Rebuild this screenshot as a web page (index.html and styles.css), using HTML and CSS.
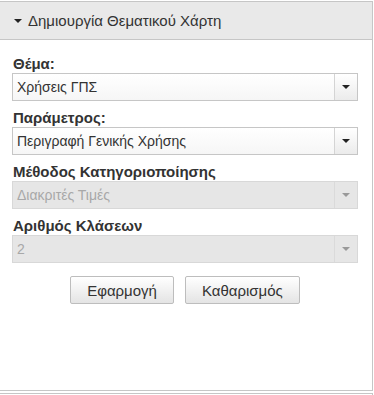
FILE: index.html
```html
<!DOCTYPE html>
<html lang="el">
<head>
  <meta charset="UTF-8" />
  <meta name="viewport" content="width=device-width, initial-scale=1.0"/>
  <title>Δημιουργία Θεματικού Χάρτη</title>
  <link rel="stylesheet" href="styles.css">
</head>
<body>
  <div class="panel">
    <div class="panel-head">
      <span class="caret"></span>Δημιουργία Θεματικού Χάρτη
    </div>
    <div class="panel-body">
      <div class="field">
        <div class="field-label">Θέμα:</div>
        <div class="combo">
          <span class="combo-text">Χρήσεις ΓΠΣ</span>
          <span class="combo-btn"><span class="arrow"></span></span>
        </div>
      </div>
      <div class="field">
        <div class="field-label">Παράμετρος:</div>
        <div class="combo">
          <span class="combo-text">Περιγραφή Γενικής Χρήσης</span>
          <span class="combo-btn"><span class="arrow"></span></span>
        </div>
      </div>
      <div class="field">
        <div class="field-label">Μέθοδος Κατηγοριοποίησης</div>
        <div class="combo disabled">
          <span class="combo-text">Διακριτές Τιμές</span>
          <span class="combo-btn"><span class="arrow"></span></span>
        </div>
      </div>
      <div class="field">
        <div class="field-label">Αριθμός Κλάσεων</div>
        <div class="combo disabled">
          <span class="combo-text">2</span>
          <span class="combo-btn"><span class="arrow"></span></span>
        </div>
      </div>
      <div class="actions">
        <button type="button" class="btn">Εφαρμογή</button>
        <button type="button" class="btn">Καθαρισμός</button>
      </div>
    </div>
  </div>
  <div class="panel next"></div>
</body>
</html>
```

FILE: styles.css
```css
body { margin: 0; padding-top: 1px; font-family: "Liberation Sans", Arial, sans-serif; color: #333; background: #fff; overflow: hidden; }
.panel { margin-left: -1px; width: 372px; border: 1px solid #c6c6c6; }
.panel-head { height: 37px; line-height: 37px; background: #e9e9e9; border-bottom: 1px solid #c6c6c6; padding-left: 14px; font-size: 15px; color: #333; }
.caret { display: inline-block; width: 0; height: 0; border-left: 4px solid transparent; border-right: 4px solid transparent; border-top: 4px solid #222; margin-right: 6px; vertical-align: 3px; }
.panel-body { box-sizing: border-box; height: 350px; padding: 16px 14px 0 12px; }
.field { margin-bottom: 9px; }
.field-label { font-size: 15px; font-weight: bold; line-height: 16px; margin-bottom: 1px; padding-left: 1px; }
.combo { display: flex; height: 26px; border: 1px solid #c6c6c6; background: linear-gradient(#fff, #f6f6f6); }
.combo-text { flex: 1; line-height: 26px; font-size: 14px; padding-left: 4px; }
.combo-btn { width: 22px; border-left: 1px solid #d4d4d4; background: linear-gradient(#fff, #ebebeb); display: flex; align-items: center; justify-content: center; }
.arrow { width: 0; height: 0; border-left: 4px solid transparent; border-right: 4px solid transparent; border-top: 4px solid #222; }
.combo.disabled { background: #e6e6e6; border-color: #d8d8d8; }
.combo.disabled .combo-text { color: #a8a8a8; }
.combo.disabled .combo-btn { background: #e6e6e6; border-left-color: #dadada; }
.combo.disabled .arrow { border-top-color: #999; }
.actions { display: flex; justify-content: center; gap: 11px; margin-top: 13px; }
.btn { height: 28px; padding: 0 16px; font-family: inherit; font-size: 15px; color: #333; border: 1px solid #bdbdbd; border-radius: 2px; background: linear-gradient(#fff, #e4e4e4); }
.panel.next { margin-top: 2px; height: 10px; border-bottom: none; }
```
